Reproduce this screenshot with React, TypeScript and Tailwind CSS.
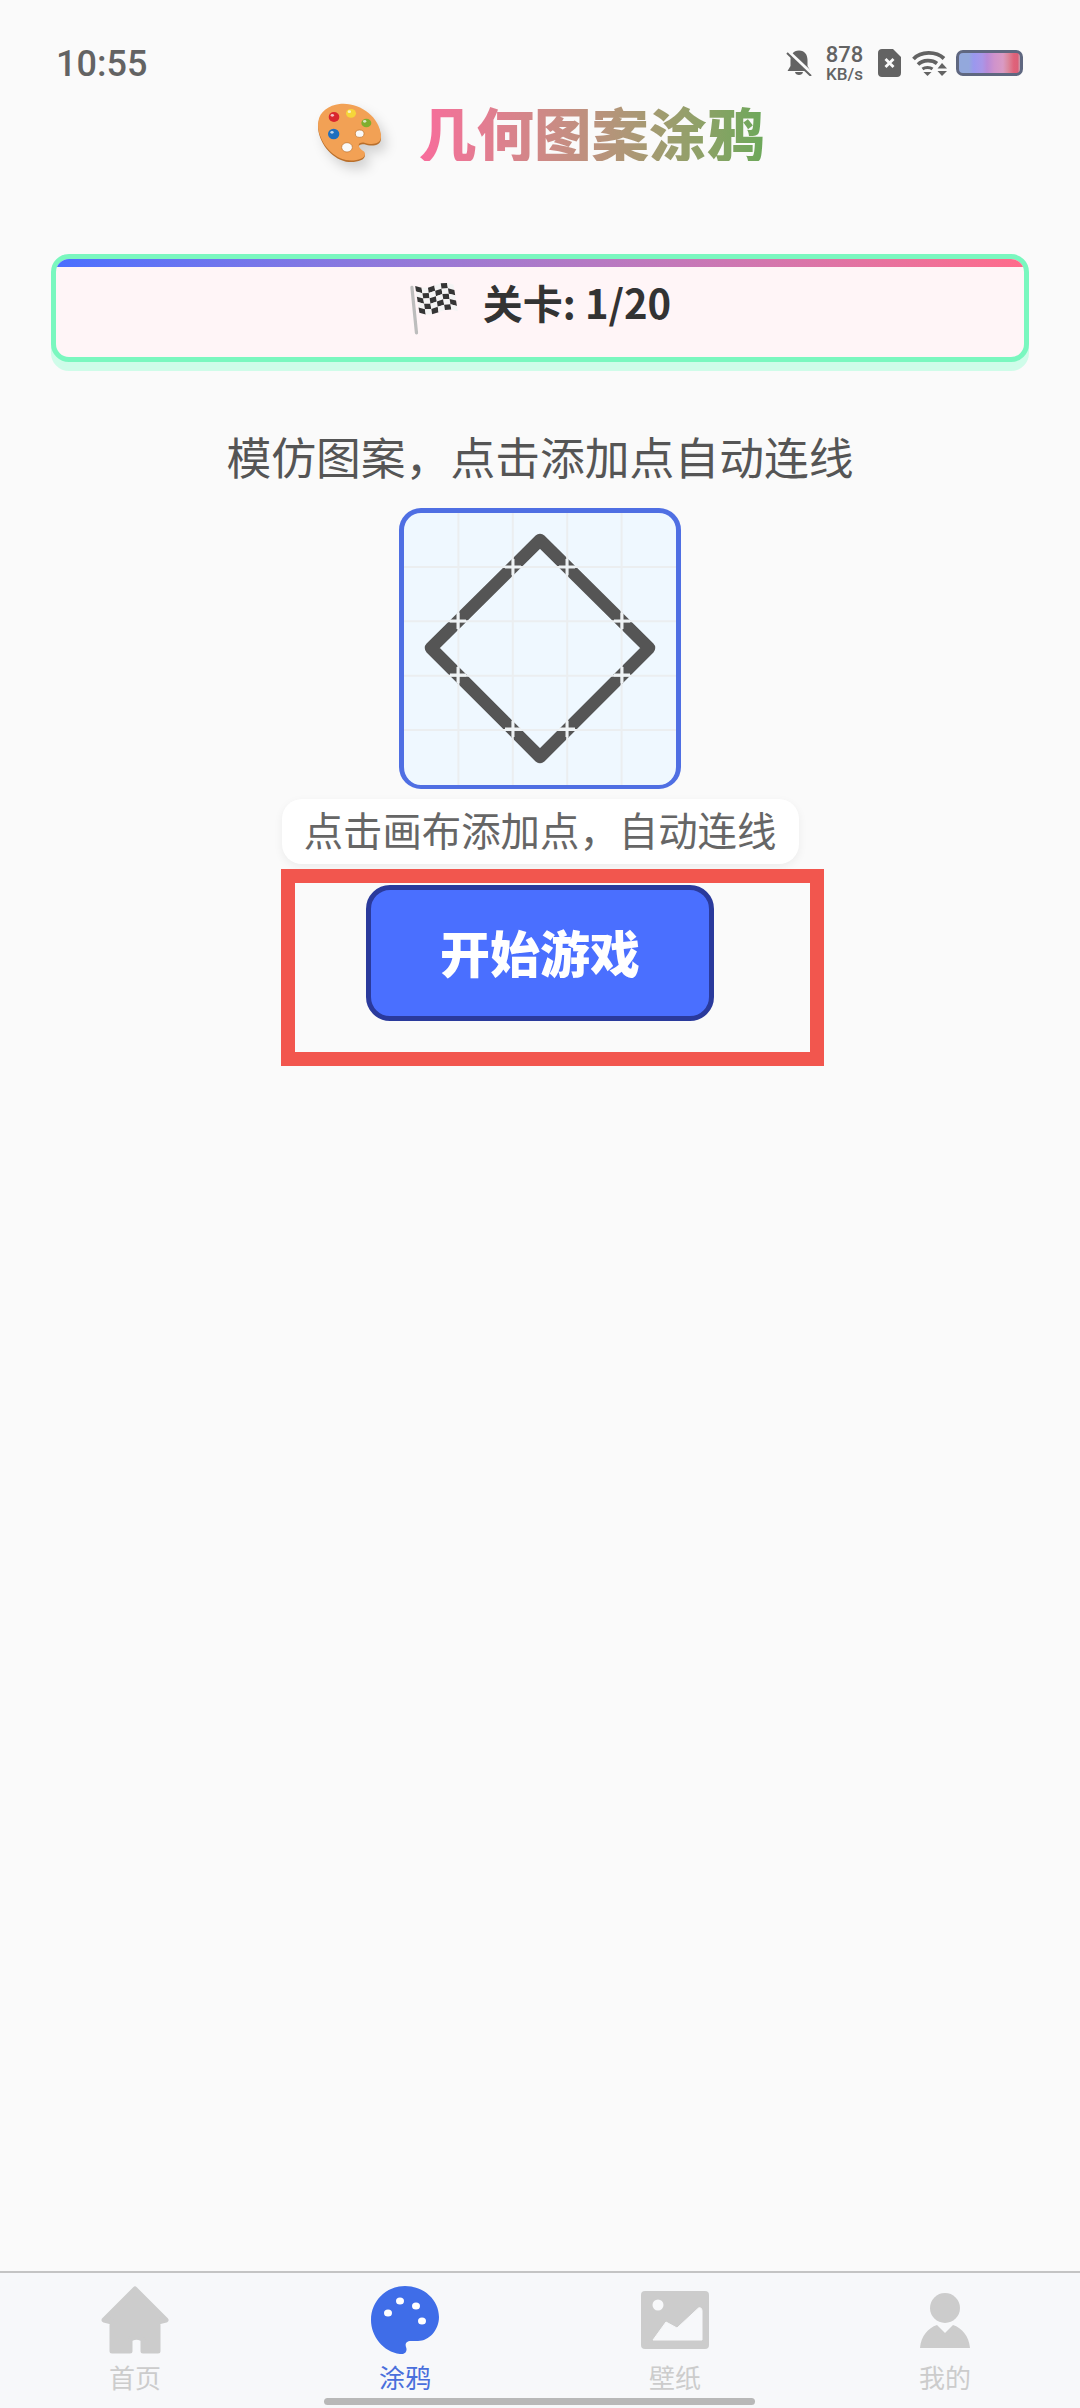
import React from 'react';

const flagCells = () => {
  const cols = 6;
  const rows = 5;
  const point = (u: number, v: number) => {
    const x = 47 + u * 118 + v * 13;
    const y = 32 + v * 82 + Math.sin(u * 6.2) * 7 - u * 4;
    return `${x.toFixed(1)},${y.toFixed(1)}`;
  };
  const cells: React.ReactNode[] = [];
  for (let r = 0; r < rows; r++) {
    for (let c = 0; c < cols; c++) {
      const dark = (r + c) % 2 === 0;
      const pts = [
        point(c / cols, r / rows),
        point((c + 1) / cols, r / rows),
        point((c + 1) / cols, (r + 1) / rows),
        point(c / cols, (r + 1) / rows),
      ].join(' ');
      cells.push(<polygon key={`${r}-${c}`} points={pts} fill={dark ? '#353535' : '#f4f4f4'} />);
    }
  }
  return cells;
};

const FlagIcon = () => (
  <svg width="51" height="52" viewBox="28 25 157 155">
    <line x1="37" y1="36" x2="51" y2="176" stroke="#bdbdbd" strokeWidth="10" strokeLinecap="round" />
    {flagCells()}
  </svg>
);

const PaletteEmoji = () => (
  <svg width="67" height="62" viewBox="50 35 201 186" className="drop-shadow-[5px_7px_6px_rgba(0,0,0,0.16)]">
    <path
      d="M120 46 C180 39 240 84 245 139 C248 169 215 169 195 162 C175 159 170 174 195 189 C205 209 170 219 140 214 C90 204 50 144 57 99 C60 69 90 49 120 46 Z"
      fill="#b96f2b"
    />
    <path
      d="M120 41 C180 34 240 79 245 134 C248 164 215 164 195 157 C175 154 170 169 195 184 C205 204 170 214 140 209 C90 199 50 139 57 94 C60 64 90 44 120 41 Z"
      fill="#f2a155"
    />
    <ellipse cx="104" cy="80" rx="16" ry="15" fill="#d9262e" />
    <ellipse cx="155" cy="69" rx="15" ry="13" fill="#f5d63a" />
    <ellipse cx="201" cy="98" rx="15" ry="13" fill="#7fae2e" />
    <ellipse cx="103" cy="131" rx="17" ry="16" fill="#1f6fc0" />
    <ellipse cx="99" cy="75" rx="5" ry="4" fill="#ffffff" opacity="0.7" />
    <ellipse cx="150" cy="64" rx="5" ry="4" fill="#ffffff" opacity="0.7" />
    <ellipse cx="196" cy="93" rx="5" ry="4" fill="#ffffff" opacity="0.7" />
    <ellipse cx="98" cy="126" rx="5" ry="4" fill="#ffffff" opacity="0.7" />
    <ellipse cx="181" cy="130" rx="13" ry="11" fill="#fafafa" stroke="#b96f2b" strokeWidth="2" />
    <ellipse cx="143" cy="171" rx="16" ry="14" fill="#fafafa" stroke="#b96f2b" strokeWidth="2" />
  </svg>
);

const BellOff = () => (
  <svg width="26" height="26" viewBox="0 0 26 26">
    <path d="M13 0.5 C7 0.5 4.5 5 4.5 10 L4.5 16 L1.5 21 L24.5 21 L21.5 16 L21.5 10 C21.5 5 19 0.5 13 0.5 Z" fill="#636363" />
    <path d="M9 22 L17 22 C16.5 26 9.5 26 9 22 Z" fill="#636363" />
    <line x1="1" y1="0.5" x2="26" y2="24" stroke="#fafafa" strokeWidth="3.6" />
    <line x1="1" y1="3" x2="25" y2="26" stroke="#636363" strokeWidth="2" />
  </svg>
);

const SimIcon = () => (
  <svg width="23" height="28" viewBox="0 0 23 28">
    <path d="M4 0 L15 0 L23 8 L23 24 C23 26.5 21.5 28 19 28 L4 28 C1.5 28 0 26.5 0 24 L0 4 C0 1.5 1.5 0 4 0 Z" fill="#636363" />
    <path d="M7.5 10 L15.5 18 M15.5 10 L7.5 18" stroke="#fafafa" strokeWidth="2.8" />
  </svg>
);

const WifiIcon = () => (
  <svg width="35" height="26" viewBox="0 0 35 26" fill="none">
    <path d="M1.5 9 C9 1 24 1 32 8.5" stroke="#636363" strokeWidth="3.8" />
    <path d="M6 14.5 C11 9.5 20 9.5 25 13.5" stroke="#636363" strokeWidth="3.6" />
    <path d="M10.5 19 C13 17 18 17 20.5 19" stroke="#636363" strokeWidth="3" />
    <path d="M11.5 22 L19.5 22 L15.5 26 Z" fill="#636363" />
    <path d="M30 13 L35 18.5 L25.5 18.5 Z" fill="#636363" />
    <path d="M25.5 21 L35 21 L30 26 Z" fill="#636363" />
  </svg>
);

const HomeIcon = () => (
  <svg width="68" height="68" viewBox="0 0 68 68">
    <path
      d="M34 3 L65 34 L57 36 L57 65 L42 65 L42 55 C42 50 29 50 29 55 L29 65 L11 65 L11 36 L3 34 Z"
      fill="#cccccc"
      stroke="#cccccc"
      strokeWidth="5"
      strokeLinejoin="round"
    />
  </svg>
);

const PaletteIcon = () => (
  <svg width="68" height="68" viewBox="0 0 68 68">
    <path
      d="M34 0 C53 0 68 14 68 31 C68 44 58 55 47 55 L40 55 C35 55 34 58 35 61 C37 66 33 69 29 68 C12 66 0 50 0 34 C0 15 15 0 34 0 Z"
      fill="#3f6de8"
    />
    <ellipse cx="17" cy="27" rx="4" ry="3.5" fill="#ffffff" />
    <ellipse cx="29" cy="15" rx="4" ry="3.5" fill="#ffffff" />
    <ellipse cx="45" cy="20" rx="4" ry="3.5" fill="#ffffff" />
    <ellipse cx="51" cy="35" rx="4" ry="3.5" fill="#ffffff" />
  </svg>
);

const ImageIcon = () => (
  <svg width="68" height="58" viewBox="0 0 68 58">
    <rect x="0" y="0" width="68" height="58" rx="4" fill="#cccccc" />
    <circle cx="17" cy="14" r="5.5" fill="#f7f8fa" />
    <path d="M12 49 L25 31 L36 37 L57.5 17 C59 16 61 17 61 20 L61 49 Z" fill="#f7f8fa" stroke="#f7f8fa" strokeLinejoin="round" />
  </svg>
);

const PersonIcon = () => (
  <svg width="50" height="55" viewBox="0 0 50 55">
    <circle cx="25" cy="15" r="15" fill="#cccccc" />
    <path d="M0 55 C1 43 8 35 17 32 L25 40 L33 32 C42 35 49 43 50 55 Z" fill="#cccccc" />
  </svg>
);

const gridStops = [54.4, 108.8, 163.2, 217.6];
const crossings = [
  [109, 54], [163, 54], [54, 108], [218, 108],
  [54, 162], [218, 162], [109, 216], [163, 216],
];

const PatternCanvas = () => (
  <svg width="272" height="272" viewBox="0 0 272 272" className="block">
    <path d="M136 27 L245 135 L136 244 L27 135 Z" fill="none" stroke="#555555" strokeWidth="12.5" strokeLinejoin="round" />
    {gridStops.map((p) => (
      <g key={p}>
        <line x1={p} y1="0" x2={p} y2="272" stroke="#ebeef0" strokeWidth="2" />
        <line x1="0" y1={p - 0.5} x2="272" y2={p - 0.5} stroke="#ebeef0" strokeWidth="2" />
      </g>
    ))}
    {crossings.map(([x, y]) => (
      <path key={`${x}-${y}`} d={`M${x - 8} ${y} L${x + 8} ${y} M${x} ${y - 8} L${x} ${y + 8}`} stroke="#eef2f4" strokeWidth="3" />
    ))}
  </svg>
);

const tabs = [
  { label: '首页', icon: <HomeIcon />, active: false },
  { label: '涂鸦', icon: <PaletteIcon />, active: true },
  { label: '壁纸', icon: <ImageIcon />, active: false },
  { label: '我的', icon: <PersonIcon />, active: false },
];

export default function App() {
  return (
    <div className="relative w-[1080px] h-[2408px] overflow-hidden flex flex-col bg-[#fafafa] font-['Noto_Sans_CJK_SC',sans-serif]">
      {/* Status bar */}
      <div className="h-[66px] mt-[30px] pl-[56px] pr-[57px] flex items-center justify-between font-['Roboto',sans-serif] text-[#636363]">
        <span className="text-[36px] font-medium leading-none pt-[2px]">10:55</span>
        <div className="flex items-center">
          <BellOff />
          <div className="ml-[14px] w-[37px] flex flex-col items-center font-medium">
            <span className="text-[22px] leading-[22px]">878</span>
            <span className="text-[17px] leading-[17px]">KB/s</span>
          </div>
          <div className="ml-[15px] flex"><SimIcon /></div>
          <div className="ml-[11px] flex"><WifiIcon /></div>
          <div className="ml-[9px] w-[67px] h-[26px] rounded-[7px] border-[3px] border-[#5f6780] bg-[linear-gradient(90deg,#93a8dc_0%,#93a8dc_16%,#9a98ee_24%,#a996e8_38%,#b88ad8_46%,#cf93cc_58%,#d99ac4_72%,#da8aa0_80%,#e0627a_90%,#dc6078_96%,#c8a0b0_100%)]" />
        </div>
      </div>

      {/* Title */}
      <div className="h-[76px] pb-[3px] flex items-center justify-center gap-[36px]">
        <PaletteEmoji />
        <h1 className="text-[57.5px] leading-none font-black bg-linear-to-r from-[#f86c9c] to-[#6ca85a] bg-clip-text text-transparent">
          几何图案涂鸦
        </h1>
      </div>

      {/* Level card */}
      <div className="mt-[82px] ml-[51px] w-[978px] h-[108px] rounded-[18px] border-[5px] border-[#7af7bf] bg-[#fff5f7] shadow-[0_9px_0_#cffce9] overflow-hidden flex flex-col">
        <div className="h-[8px] shrink-0 bg-linear-to-r from-[#4a6fff] to-[#ff6b8b]" />
        <div className="flex-1 flex items-center justify-center gap-[23px] pb-[6px]">
          <FlagIcon />
          <span className="mb-[14px] text-[40px] leading-none font-bold text-[#333333]">关卡: 1/20</span>
        </div>
      </div>

      <p className="mt-[64px] h-[60px] text-center text-[44.8px] leading-[60px] text-[#555555]">
        模仿图案，点击添加点自动连线
      </p>

      {/* Pattern preview */}
      <div className="mt-[22px] mx-auto w-[282px] h-[281px] rounded-[22px] border-[5px] border-b-[4px] border-[#4f6fe3] bg-[#eff8ff] overflow-hidden">
        <PatternCanvas />
      </div>

      <div className="mt-[10px] mx-auto w-[517px] h-[65px] pb-[5px] rounded-[20px] bg-white shadow-[0_3px_10px_rgba(0,0,0,0.06)] flex items-center justify-center text-[39.4px] leading-none text-[#666666]">
        点击画布添加点，自动连线
      </div>

      {/* Start button + highlight frame */}
      <div className="relative mt-[21px] mx-auto w-[348px] h-[136px]">
        <button className="w-full h-full pb-[5px] rounded-[24px] border-[5px] border-[#2a3a9c] bg-[#4a6fff] text-white text-[50px] leading-none font-black">
          开始游戏
        </button>
        <div className="absolute -left-[85px] -top-[16px] w-[543px] h-[197px] border-[14px] border-[#f2564e] pointer-events-none" />
      </div>

      <div className="flex-1" />

      {/* Bottom nav */}
      <nav className="h-[137px] border-t-2 border-[#c4c4c4] bg-[#f7f8fa] grid grid-cols-4">
        {tabs.map((tab) => (
          <div key={tab.label} className="flex flex-col items-center pt-[13px]">
            <div className="h-[68px] flex items-center justify-center">{tab.icon}</div>
            <span className={`mt-[10px] text-[26px] leading-[26px] ${tab.active ? 'text-[#4a6fdc]' : 'text-[#cccccc]'}`}>
              {tab.label}
            </span>
          </div>
        ))}
      </nav>
      <div className="absolute left-[324px] bottom-[3px] w-[431px] h-[7px] rounded-full bg-[#b8b8b8]" />
    </div>
  );
}
